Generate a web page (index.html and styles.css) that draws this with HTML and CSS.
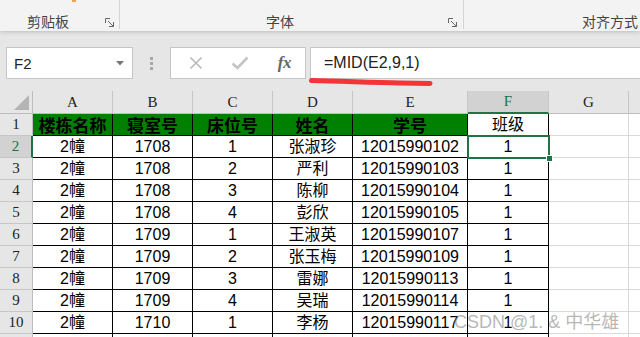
FILE: index.html
```html
<!DOCTYPE html>
<html lang="zh-CN">
<head>
<meta charset="utf-8">
<title>Excel</title>
<link rel="stylesheet" href="styles.css">
</head>
<body>
<div class="app">
  <div class="ribbon">
    <div class="group g1">
      <span class="mark"></span>
      <span class="glabel">剪贴板</span>
      <svg class="launcher" width="10" height="10" viewBox="0 0 10 10"><path d="M0.5 5V0.5H5M3 3L8.5 8.5M8.5 4V8.5H4" fill="none" stroke="#666" stroke-width="1"/></svg>
    </div>
    <div class="group g2">
      <span class="glabel">字体</span>
      <svg class="launcher" width="10" height="10" viewBox="0 0 10 10"><path d="M0.5 5V0.5H5M3 3L8.5 8.5M8.5 4V8.5H4" fill="none" stroke="#666" stroke-width="1"/></svg>
    </div>
    <div class="group g3">
      <span class="glabel">对齐方式</span>
    </div>
  </div>

  <div class="fbar">
    <div class="namebox">
      <span class="ref">F2</span>
      <svg class="dd" width="8" height="5" viewBox="0 0 8 5"><path d="M0 0H8L4 4.5Z" fill="#777"/></svg>
    </div>
    <div class="dots"><i></i><i></i><i></i></div>
    <div class="fbtns">
      <svg width="14" height="14" viewBox="0 0 14 14"><path d="M1.5 1.5L12.5 12.5M12.5 1.5L1.5 12.5" stroke="#b9b9b9" stroke-width="1.6" fill="none"/></svg>
      <svg width="18" height="14" viewBox="0 0 18 14"><path d="M1.5 7.5L6.5 12L16.5 1.5" stroke="#c4c4c4" stroke-width="2.6" fill="none"/></svg>
      <span class="fx">fx</span>
    </div>
    <div class="finput">=MID(E2,9,1)</div>
  </div>

  <div class="sheet">
    <div class="corner"><span class="tri"></span></div>
    <div class="ch">A</div><div class="ch">B</div><div class="ch">C</div><div class="ch">D</div><div class="ch">E</div><div class="ch sel">F</div><div class="ch">G</div><div class="ch last"></div>

    <div class="rh">1</div>
    <div class="c t hd">楼栋名称</div><div class="c t hd">寝室号</div><div class="c t hd">床位号</div><div class="c t hd">姓名</div><div class="c t hd">学号</div><div class="c t">班级</div><div class="c"></div><div class="c"></div>

    <div class="rh sel">2</div>
    <div class="c t">2幢</div><div class="c t">1708</div><div class="c t">1</div><div class="c t">张淑珍</div><div class="c t">12015990102</div><div class="c t active">1<span class="handle"></span></div><div class="c"></div><div class="c"></div>

    <div class="rh">3</div>
    <div class="c t">2幢</div><div class="c t">1708</div><div class="c t">2</div><div class="c t">严利</div><div class="c t">12015990103</div><div class="c t">1</div><div class="c"></div><div class="c"></div>

    <div class="rh">4</div>
    <div class="c t">2幢</div><div class="c t">1708</div><div class="c t">3</div><div class="c t">陈柳</div><div class="c t">12015990104</div><div class="c t">1</div><div class="c"></div><div class="c"></div>

    <div class="rh">5</div>
    <div class="c t">2幢</div><div class="c t">1708</div><div class="c t">4</div><div class="c t">彭欣</div><div class="c t">12015990105</div><div class="c t">1</div><div class="c"></div><div class="c"></div>

    <div class="rh">6</div>
    <div class="c t">2幢</div><div class="c t">1709</div><div class="c t">1</div><div class="c t">王淑英</div><div class="c t">12015990107</div><div class="c t">1</div><div class="c"></div><div class="c"></div>

    <div class="rh">7</div>
    <div class="c t">2幢</div><div class="c t">1709</div><div class="c t">2</div><div class="c t">张玉梅</div><div class="c t">12015990109</div><div class="c t">1</div><div class="c"></div><div class="c"></div>

    <div class="rh">8</div>
    <div class="c t">2幢</div><div class="c t">1709</div><div class="c t">3</div><div class="c t">雷娜</div><div class="c t">12015990113</div><div class="c t">1</div><div class="c"></div><div class="c"></div>

    <div class="rh">9</div>
    <div class="c t">2幢</div><div class="c t">1709</div><div class="c t">4</div><div class="c t">吴瑞</div><div class="c t">12015990114</div><div class="c t">1</div><div class="c"></div><div class="c"></div>

    <div class="rh">10</div>
    <div class="c t">2幢</div><div class="c t">1710</div><div class="c t">1</div><div class="c t">李杨</div><div class="c t">12015990117</div><div class="c t">1</div><div class="c"></div><div class="c"></div>

    <div class="rh"></div>
    <div class="c t"></div><div class="c t"></div><div class="c t"></div><div class="c t"></div><div class="c t"></div><div class="c t"></div><div class="c"></div><div class="c"></div>
  </div>

  <svg class="scribble" width="640" height="337" viewBox="0 0 640 337"><path d="M311.5 80.5C340 81 370 82.5 400 83C415 83.3 425 83.4 430 83.5" stroke="#f53438" stroke-width="5" stroke-linecap="round" fill="none"/></svg>
  <div class="watermark">CSDN @1. &amp; 中华雄</div>
</div>
</body>
</html>
```

FILE: styles.css
```css
* { box-sizing: border-box; }
html, body { margin: 0; padding: 0; }
body {
  width: 640px;
  height: 337px;
  overflow: hidden;
  background: #e6e6e6;
  font-family: "Liberation Sans", "Noto Sans CJK SC", sans-serif;
}
.app {
  position: relative;
  width: 640px;
  height: 337px;
  overflow: hidden;
}

/* ribbon */
.ribbon {
  height: 31px;
  background: #f3f3f3;
  display: flex;
  box-shadow: 0 1px 4px rgba(0,0,0,0.18);
  position: relative;
  z-index: 2;
}
.group {
  position: relative;
  height: 29px;
  border-right: 1px solid #d4d4d4;
  display: flex;
  align-items: flex-end;
}
.g1 { width: 120px; padding-left: 27px; }
.g2 { width: 344px; padding-left: 146px; }
.g3 { flex: 1; border-right: none; padding-left: 118px; }
.glabel {
  font-family: "Noto Sans CJK SC", sans-serif;
  font-size: 14px;
  line-height: 14px;
  color: #444;
  padding-bottom: 1px;
  white-space: nowrap;
}
.launcher { position: absolute; right: 4px; bottom: 1px; }
.g2 .launcher { right: 5px; }
.mark {
  position: absolute;
  left: 72px; top: 0;
  width: 4px; height: 2px;
  background: #f0a050;
}

/* formula bar */
.fbar {
  height: 60px;
  padding: 16px 0 0 6px;
  display: flex;
  align-items: flex-start;
}
.namebox {
  width: 127px;
  height: 32px;
  background: #fff;
  border: 1px solid #c6c6c6;
  display: flex;
  align-items: center;
  justify-content: space-between;
  padding: 0 8px 0 7px;
}
.ref { font-size: 15px; color: #222; }
.dots {
  width: 37px;
  height: 32px;
  display: flex;
  flex-direction: column;
  align-items: center;
  justify-content: center;
  gap: 2px;
}
.dots i { display: block; width: 3px; height: 3px; background: #a8a8a8; }
.fbtns {
  width: 136px;
  height: 32px;
  background: #fff;
  border: 1px solid #c6c6c6;
  display: flex;
  align-items: center;
  padding: 0 14px 0 18px;
  justify-content: space-between;
}
.fx {
  font-family: "Liberation Serif", serif;
  font-style: italic;
  font-weight: bold;
  font-size: 17px;
  color: #666;
  letter-spacing: -0.5px;
}
.finput {
  margin-left: 4px;
  flex: 1;
  height: 32px;
  background: #fff;
  border: 1px solid #c6c6c6;
  border-right: none;
  font-size: 16px;
  color: #222;
  padding-left: 13px;
  display: flex;
  align-items: center;
}

/* sheet */
.sheet {
  display: grid;
  grid-template-columns: 33px 80px 80px 80px 80px 115px 81px 80px 80px;
  grid-template-rows: 23px;
  grid-auto-rows: 22px;
  background: #fff;
}
.corner {
  background: #e6e6e6;
  border-right: 1px solid #bdbdbd;
  border-bottom: 1px solid #bdbdbd;
  position: relative;
}
.tri {
  position: absolute;
  right: 3px; bottom: 3px;
  width: 15px; height: 15px;
  background: #b4b4b4;
  clip-path: polygon(100% 0, 100% 100%, 0 100%);
}
.ch, .rh {
  background: #e6e6e6;
  font-family: "Liberation Serif", serif;
  font-size: 15px;
  color: #222;
  display: flex;
  align-items: center;
  justify-content: center;
}
.ch {
  border-right: 1px solid #c6c6c6;
  border-bottom: 1px solid #bdbdbd;
}
.ch.sel {
  background: #d2d2d2;
  color: #217346;
  border-bottom: 2px solid #217346;
}
.ch.last { border-right: none; }
.rh {
  border-right: 1px solid #bdbdbd;
  border-bottom: 1px solid #c6c6c6;
}
.rh.sel {
  background: #d2d2d2;
  color: #217346;
  border-right: 2px solid #217346;
}
.c {
  border-right: 1px solid #d9d9d9;
  border-bottom: 1px solid #d9d9d9;
  display: flex;
  align-items: center;
  justify-content: center;
  font-size: 16px;
  line-height: 18px;
  color: #000;
  white-space: nowrap;
  position: relative;
}
.c.t {
  border-right: 1px solid #000;
  border-bottom: 1px solid #000;
}
.c.hd {
  background: #008000;
  font-family: "Noto Sans CJK SC", sans-serif;
  font-weight: bold;
  font-size: 17px;
}
.c.active {
  outline: 2px solid #217346;
  outline-offset: -1px;
  z-index: 1;
}
.handle {
  position: absolute;
  right: -5px; bottom: -5px;
  width: 7px; height: 7px;
  background: #217346;
  border: 1px solid #fff;
}

/* overlays */
.scribble {
  position: absolute;
  left: 0; top: 0;
  pointer-events: none;
  z-index: 5;
}
.watermark {
  position: absolute;
  left: 454px;
  top: 307px;
  font-size: 18px;
  color: rgba(110, 110, 110, 0.5);
  white-space: nowrap;
  z-index: 5;
}
```
